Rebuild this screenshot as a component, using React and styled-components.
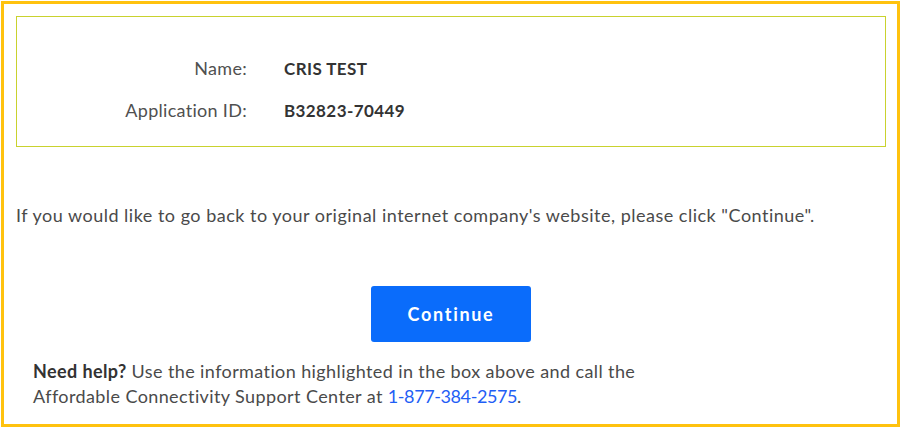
import React from 'react';
import styled, { createGlobalStyle } from 'styled-components';

const GlobalStyle = createGlobalStyle`
    html, body {
        margin: 0;
        padding: 0;
        background: #ffffff;
    }
    body {
        font-family: Lato, 'Liberation Sans', sans-serif;
        color: #4a4a4a;
    }
`;

const Frame = styled.div`
    box-sizing: border-box;
    width: 899px;
    height: 426px;
    margin: 1px 0 0 1px;
    border: 3px solid #ffc20e;
    padding: 12px 11px 0 12px;
    display: flex;
    flex-direction: column;
`;

const InfoBox = styled.div`
    border: 1px solid #c9d22e;
    padding: 30px 0 15px 0;
    display: grid;
    grid-template-columns: 230px auto;
    column-gap: 37px;
    grid-auto-rows: 42px;
    align-items: center;
`;

const Label = styled.div`
    text-align: right;
    font-size: 18px;
    letter-spacing: 0.3px;
    color: #505050;
`;

const Value = styled.div`
    font-size: 17px;
    font-weight: 700;
    letter-spacing: 0.4px;
    color: #333333;
`;

const Message = styled.p`
    margin: 55px 0 0 0;
    font-size: 18px;
    letter-spacing: 0.5px;
    line-height: 26px;
    color: #4a4a4a;
`;

const Actions = styled.div`
    display: flex;
    justify-content: center;
    margin-top: 58px;
`;

const Button = styled.button`
    font-family: Lato, 'Liberation Sans', sans-serif;
    width: 160px;
    height: 56px;
    background-color: #0a6cfb;
    color: #ffffff;
    border: none;
    border-radius: 3px;
    font-size: 18px;
    font-weight: 700;
    letter-spacing: 1.7px;
    cursor: pointer;
`;

const Help = styled.p`
    margin: 17px 0 0 17px;
    font-size: 18px;
    letter-spacing: 0.4px;
    line-height: 25px;
    color: #4a4a4a;

    strong {
        color: #333333;
    }
`;

const Phone = styled.a`
    color: #1f5ef5;
    letter-spacing: -0.4px;
    text-decoration: none;
`;

export default function App() {
    return (
        <>
            <GlobalStyle />
            <Frame>
                <InfoBox>
                    <Label>Name:</Label>
                    <Value>CRIS TEST</Value>
                    <Label>Application ID:</Label>
                    <Value>B32823-70449</Value>
                </InfoBox>
                <Message>
                    If you would like to go back to your original internet company's website, please
                    click "Continue".
                </Message>
                <Actions>
                    <Button type="button">Continue</Button>
                </Actions>
                <Help>
                    <strong>Need help?</strong> Use the information highlighted in the box above and call
                    the
                    <br />
                    Affordable Connectivity Support Center at <Phone href="#">1-877-384-2575</Phone>.
                </Help>
            </Frame>
        </>
    );
}
